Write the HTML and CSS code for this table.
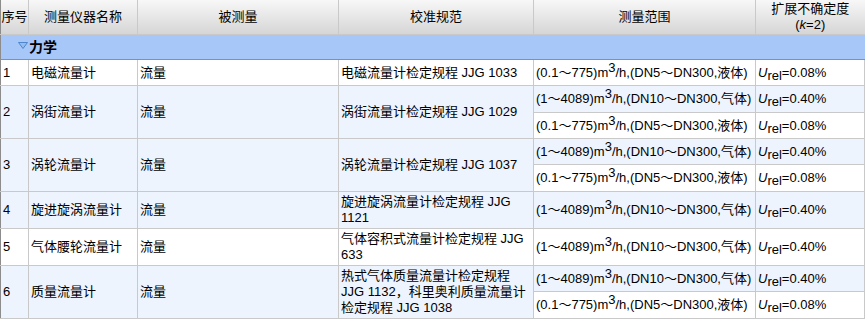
FILE: index.html
```html
<!DOCTYPE html>
<html lang="zh">
<head>
<meta charset="utf-8">
<link rel="stylesheet" href="styles.css">
</head>
<body>
<table class="grid">
  <colgroup>
    <col class="c1"><col class="c2"><col class="c3"><col class="c4"><col class="c5"><col class="c6">
  </colgroup>
  <thead>
    <tr class="head">
      <th>序号</th><th>测量仪器名称</th><th>被测量</th><th>校准规范</th><th>测量范围</th><th>扩展不确定度<br>(<i>k</i>=2)</th>
    </tr>
  </thead>
  <tbody>
    <tr class="group">
      <td colspan="6"><span class="tri"><svg width="10" height="7" viewBox="0 0 10 7"><path d="M0.5 0.5 H9.5 L5 6.5 Z" fill="#93bdf0" stroke="#4f86cc" stroke-width="1"/></svg></span><b>力学</b></td>
    </tr>
    <tr class="odd r26">
      <td>1</td><td>电磁流量计</td><td>流量</td><td>电磁流量计检定规程 JJG 1033</td>
      <td>(0.1～775)m<sup>3</sup>/h,(DN5～DN300,液体)</td><td><i>U</i><sub>rel</sub>=0.08%</td>
    </tr>
    <tr class="even r27">
      <td rowspan="2">2</td><td rowspan="2">涡街流量计</td><td rowspan="2">流量</td><td rowspan="2">涡街流量计检定规程 JJG 1029</td>
      <td>(1～4089)m<sup>3</sup>/h,(DN10～DN300,气体)</td><td><i>U</i><sub>rel</sub>=0.40%</td>
    </tr>
    <tr class="odd r26">
      <td>(0.1～775)m<sup>3</sup>/h,(DN5～DN300,液体)</td><td><i>U</i><sub>rel</sub>=0.08%</td>
    </tr>
    <tr class="even r26">
      <td rowspan="2">3</td><td rowspan="2">涡轮流量计</td><td rowspan="2">流量</td><td rowspan="2">涡轮流量计检定规程 JJG 1037</td>
      <td>(1～4089)m<sup>3</sup>/h,(DN10～DN300,气体)</td><td><i>U</i><sub>rel</sub>=0.40%</td>
    </tr>
    <tr class="odd r27">
      <td>(0.1～775)m<sup>3</sup>/h,(DN5～DN300,液体)</td><td><i>U</i><sub>rel</sub>=0.08%</td>
    </tr>
    <tr class="even r37">
      <td>4</td><td>旋进旋涡流量计</td><td>流量</td><td>旋进旋涡流量计检定规程 JJG 1121</td>
      <td>(1～4089)m<sup>3</sup>/h,(DN10～DN300,气体)</td><td><i>U</i><sub>rel</sub>=0.40%</td>
    </tr>
    <tr class="odd r37">
      <td>5</td><td>气体腰轮流量计</td><td>流量</td><td>气体容积式流量计检定规程 JJG 633</td>
      <td>(1～4089)m<sup>3</sup>/h,(DN10～DN300,气体)</td><td><i>U</i><sub>rel</sub>=0.40%</td>
    </tr>
    <tr class="even r26">
      <td rowspan="2">6</td><td rowspan="2">质量流量计</td><td rowspan="2">流量</td><td rowspan="2">热式气体质量流量计检定规程 JJG 1132，科里奥利质量流量计检定规程 JJG 1038</td>
      <td>(1～4089)m<sup>3</sup>/h,(DN10～DN300,气体)</td><td><i>U</i><sub>rel</sub>=0.40%</td>
    </tr>
    <tr class="odd r27">
      <td>(0.1～775)m<sup>3</sup>/h,(DN5～DN300,液体)</td><td><i>U</i><sub>rel</sub>=0.08%</td>
    </tr>
  </tbody>
</table>
</body>
</html>
```
FILE: styles.css
```css
html, body {
  margin: 0;
  padding: 0;
  background: #ffffff;
}
body {
  font-family: "Liberation Sans", "Noto Sans CJK SC", sans-serif;
  font-size: 13px;
  color: #000;
}
.grid {
  border-collapse: collapse;
  table-layout: fixed;
  width: 864px;
  border-left: 1px solid #8c8c8c;
}
.c1 { width: 28px; }
.c2 { width: 109px; }
.c3 { width: 201px; }
.c4 { width: 195px; }
.c5 { width: 222px; }
.c6 { width: 109px; }

.head th {
  height: 34px;
  padding: 0;
  font-weight: normal;
  line-height: 16px;
  text-align: center;
  vertical-align: middle;
  background: linear-gradient(#f7f7f7, #d5d5d5);
  border-right: 1px solid #c9c9c9;
  border-bottom: 1px solid #c9c9c9;
  white-space: nowrap;
}
.head th:last-child { border-right: none; }

.group td {
  height: 24px;
  padding: 0 0 0 17px;
  background: #a6c7f7;
  border-bottom: 1px solid #8f8f8f;
  vertical-align: middle;
  line-height: 16px;
}
.tri {
  display: inline-block;
  vertical-align: 3px;
  margin-right: 1px;
}
.tri svg { display: block; }
.group b { font-weight: bold; font-size: 14px; }

tbody tr:not(.group) td {
  padding: 0 2px;
  line-height: 16px;
  vertical-align: middle;
  border-right: 1px solid #c9c9c9;
  border-bottom: 1px solid #c9c9c9;
  word-break: normal;
}
.odd td { background: #ffffff; }
.even td { background: #edf4fe; }
.r26 td { height: 25px; }
.r27 td { height: 26px; }
.r37 td { height: 36px; }

sup {
  font-size: 13px;
  line-height: 0;
  vertical-align: 5px;
}
sub {
  font-size: 13px;
  line-height: 0;
  vertical-align: -3px;
}
i { font-style: italic; }
```
